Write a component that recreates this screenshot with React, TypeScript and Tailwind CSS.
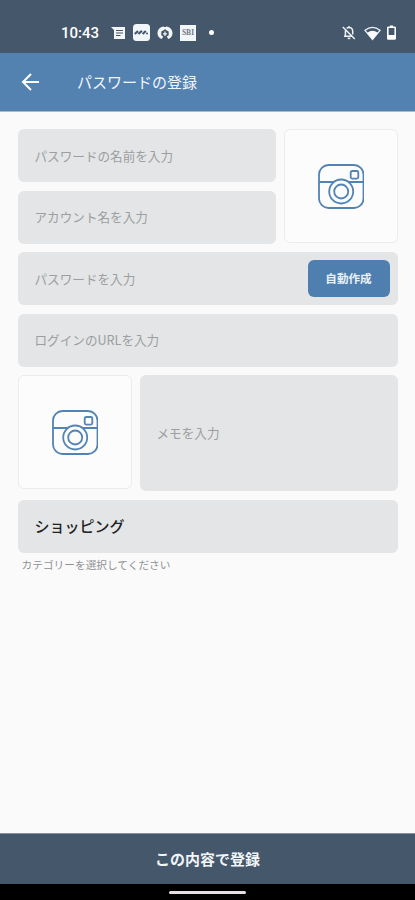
import React from 'react'

interface FieldProps {
  label: string
  className?: string
  children?: React.ReactNode
}

const Field: React.FC<FieldProps> = ({ label, className = 'h-[53px]', children }) => {
  return (
    <div className={`flex items-center justify-between rounded-md bg-[#e3e5e6] pl-[17px] pr-2 text-[12.6px] text-[#9c9ea0] ${className}`}>
      <span className="pt-px">{label}</span>
      {children}
    </div>
  )
}

const CameraBox: React.FC = () => {
  return (
    <button className="flex h-[114px] w-[114px] shrink-0 items-center justify-center rounded-md border border-[#ebecee] bg-[#fcfcfc]">
      <svg className="mt-[2px] h-[46px] w-[46px]" viewBox="0 0 46 46" fill="none" stroke="#5283b3" strokeWidth="1.8">
        <rect x="1" y="1" width="44.5" height="43" rx="9.5" />
        <path d="M1 18h14.7M30.8 18h14.7" />
        <circle cx="23.2" cy="27.5" r="12" />
        <circle cx="23.2" cy="27.5" r="7" />
        <rect x="32.7" y="7" width="7.6" height="7.6" rx="1.5" />
      </svg>
    </button>
  )
}

const StatusBar: React.FC = () => {
  return (
    <div className="flex h-[53px] items-end bg-[#45576a] pb-[12px] pl-[61px] pr-[19px] text-white">
      <span className="w-[50px] pt-px font-['Roboto','Liberation_Sans',sans-serif] text-[15px] font-medium leading-[16px]">10:43</span>
      <div className="flex h-[17px] flex-1 items-center">
        <svg className="h-[14px] w-[14px]" viewBox="0 0 14 14">
          <path d="M0 1h14v12H3V4z" fill="#f3f6f8" />
          <path d="M5 4.5h7M5 7h7M5 9.5h4.5" stroke="#45576a" strokeWidth="1.1" />
        </svg>
        <svg className="ml-[8px] h-[17px] w-[17px]" viewBox="0 0 17 17">
          <rect width="17" height="17" rx="3.5" fill="#f3f6f8" />
          <path d="M1.8 10l3.2-3M5.4 10l3.5-3.3M9.6 10l3.2-3" stroke="#45576a" strokeWidth="2.2" />
          <circle cx="14" cy="9.6" r="1" fill="#45576a" />
        </svg>
        <svg className="ml-[7px] h-[16px] w-[16px]" viewBox="0 0 16 16" fill="#f3f6f8">
          <path d="M7 1.6C3.2 1.8.5 4.7.5 8.2c0 2.700 1.700 5 4.300 5.800l1.400-2.600-1.900-1.200V6.600L7 5z" />
          <path d="M9 1.600c3.800.200 6.500 3.100 6.500 6.600 0 2.700-1.700 5-4.300 5.800l-1.400-2.600 1.900-1.200V6.600L9 5z" />
          <path d="M5 2h6v2.600H5zM7.400 6.500h1.200V11H7.400zM6 8.200h4v1.200H6z" />
        </svg>
        <span className="ml-[7px] flex h-[16px] w-[16px] items-center justify-center bg-[#f3f6f8] font-['Liberation_Serif',serif] text-[7.5px] font-bold leading-none text-[#6c7884]">SBI</span>
        <span className="ml-[13px] h-[5px] w-[5px] rounded-full bg-white" />
      </div>
      <svg className="mb-[1px] h-[15px] w-[14px]" viewBox="0 0 14 15" fill="none" stroke="#eef2f5" strokeWidth="1.5">
        <path d="M4.700 3.400C5.500 2.700 6 2.600 7 2.600c2.400 0 3.700 1.700 3.700 4v2.800M3.400 5.500v5.700M2 11.200h8.400M7 2.600V1M.8 2l12 12" />
        <path d="M5.700 13.400h2.600" />
      </svg>
      <svg className="ml-[8px] h-[16px] w-[17px]" viewBox="0 0 17 16">
        <path d="M1 5.300q7.500-6 15 0L8.500 14.500z" fill="none" stroke="#eef2f5" strokeWidth="1.300" />
        <path d="M3.200 7.700q5.300-3.700 10.600 0L8.500 14.500z" fill="#fff" />
      </svg>
      <svg className="ml-[6px] mb-[1px] h-[15px] w-[9px]" viewBox="0 0 9 15">
        <path d="M3 .5h3v1.700H3z" fill="#fff" />
        <rect x=".8" y="2.300" width="7.400" height="11.700" rx=".6" fill="none" stroke="#fff" strokeWidth="1.600" />
        <path d="M1 10h7v4H1z" fill="#fff" />
      </svg>
    </div>
  )
}

const App: React.FC = () => {
  return (
    <div className="flex h-[900px] w-[415px] flex-col bg-[#fafafa] font-['Noto_Sans_CJK_JP','Noto_Sans',sans-serif]">
      <StatusBar />
      <header className="flex h-[59px] items-center border-b border-[#a9bccd] bg-[#5381b0] pl-[21px] text-[#f0f5fa]">
        <svg className="h-[18px] w-[19px]" viewBox="0 0 19 18" fill="none" stroke="#fff" strokeWidth="2">
          <path d="M18 9H2M10 1L2 9l8 8" />
        </svg>
        <h1 className="ml-[37px] pt-px text-[15px]">パスワードの登録</h1>
      </header>

      <main className="flex flex-1 flex-col gap-[8.5px] px-[17.5px] pt-[17px]">
        <div className="flex justify-between">
          <div className="flex w-[258px] flex-col gap-[8.5px]">
            <Field label="パスワードの名前を入力" />
            <Field label="アカウント名を入力" />
          </div>
          <CameraBox />
        </div>
        <Field label="パスワードを入力">
          <button className="h-[37px] w-[82px] rounded-md bg-[#4f7fae] text-[11.6px] font-bold text-[#e8f1f8]">自動作成</button>
        </Field>
        <Field label="ログインのURLを入力" />
        <div className="flex justify-between">
          <CameraBox />
          <Field label="メモを入力" className="h-[116px] w-[258px]" />
        </div>
        <div>
          <div className="flex h-[53px] items-center rounded-md bg-[#e3e5e6] pl-[17px] text-[15px] font-medium text-[#202224]">
            ショッピング
          </div>
          <p className="pl-1 pt-1 text-[10.7px] leading-4 text-[#8f9193]">カテゴリーを選択してください</p>
        </div>
      </main>

      <button className="h-[51px] border-t border-[#8793a0] bg-[#45576a] text-[15px] font-bold text-[#f0f5f8]">この内容で登録</button>
      <div className="flex h-[16px] items-center justify-center bg-black">
        <span className="h-[3px] w-[77px] rounded-full bg-[#e6e0e2]" />
      </div>
    </div>
  )
}

export default App
